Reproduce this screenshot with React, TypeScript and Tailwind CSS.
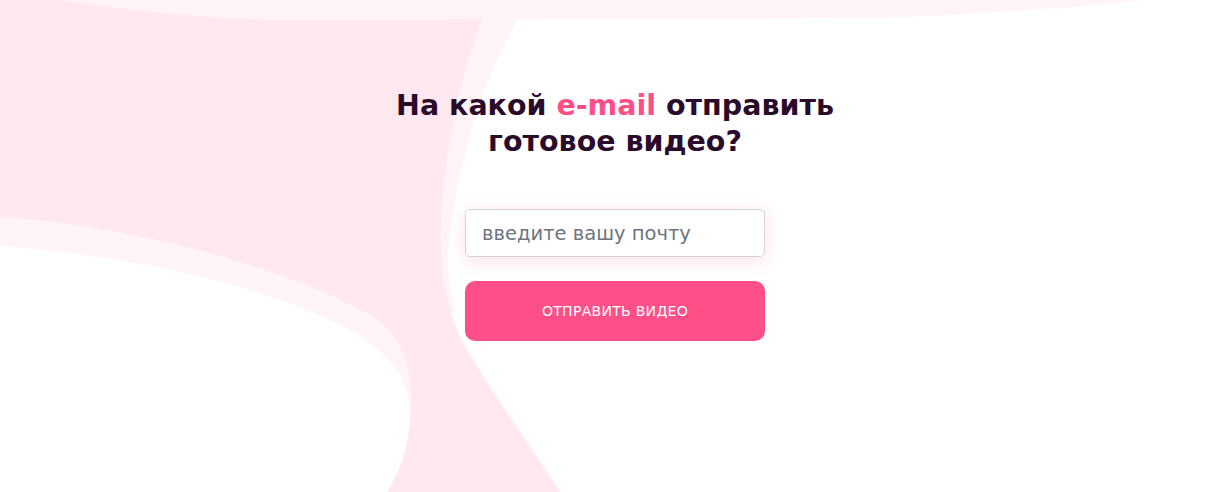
export default function App() {
  return (
    <div className="relative h-[492px] w-full overflow-hidden bg-white font-['DejaVu_Sans',sans-serif]">
      {/* background blobs */}
      <svg
        className="absolute inset-0 h-[492px] w-[1232px]"
        viewBox="0 0 1232 492"
        fill="none"
        aria-hidden="true"
      >
        <path d="M0 0 L532 0 L518 20 C492 60 462 140 449 240 C446 270 450 292 456 312 L0 312 Z" fill="#fff4f7" />
        <path
          d="M0 0 L496 0 L482 20 C462 70 446 140 441 220 C438 280 450 322 472 358 C500 405 530 445 560 492 L0 492 Z"
          fill="#ffe8ef"
        />
        <path
          d="M0 217 C130 225 290 268 372 316 C402 336 412 366 411 400 C411 430 400 465 387 492 L0 492 Z"
          fill="#fff4f7"
        />
        <path
          d="M0 246 C120 254 262 284 342 326 C395 354 412 385 410 420 C408 450 398 475 387 492 L0 492 Z"
          fill="#ffffff"
        />
        <path d="M60 0 C140 12 220 20 300 20 L880 18 C980 14 1070 8 1145 0 Z" fill="#fff4f7" />
      </svg>

      <div className="relative flex flex-col items-center pt-[88px]">
        <h1 className="mr-[2px] text-center text-[28.5px] font-bold leading-[36px] text-[#2a0b2b]">
          На какой <span className="text-[#ff4f87]">e-mail</span> отправить
          <br />
          готовое видео?
        </h1>

        <form className="mr-[2px] mt-[49px] flex w-[300px] flex-col gap-6" onSubmit={(e) => e.preventDefault()}>
          <input
            type="email"
            placeholder="введите вашу почту"
            className="h-12 w-full rounded-[5px] border border-[#d3d3da] bg-white px-4 text-[19.5px] text-[#2a0b2b] shadow-[0_4px_18px_rgba(255,79,135,0.18)] outline-none placeholder:text-[#6e7480]"
          />
          <button
            type="submit"
            className="h-[60px] w-full rounded-[10px] bg-[#ff4f88] text-[14px] font-medium uppercase tracking-[0.3px] text-white"
          >
            Отправить видео
          </button>
        </form>
      </div>
    </div>
  );
}
